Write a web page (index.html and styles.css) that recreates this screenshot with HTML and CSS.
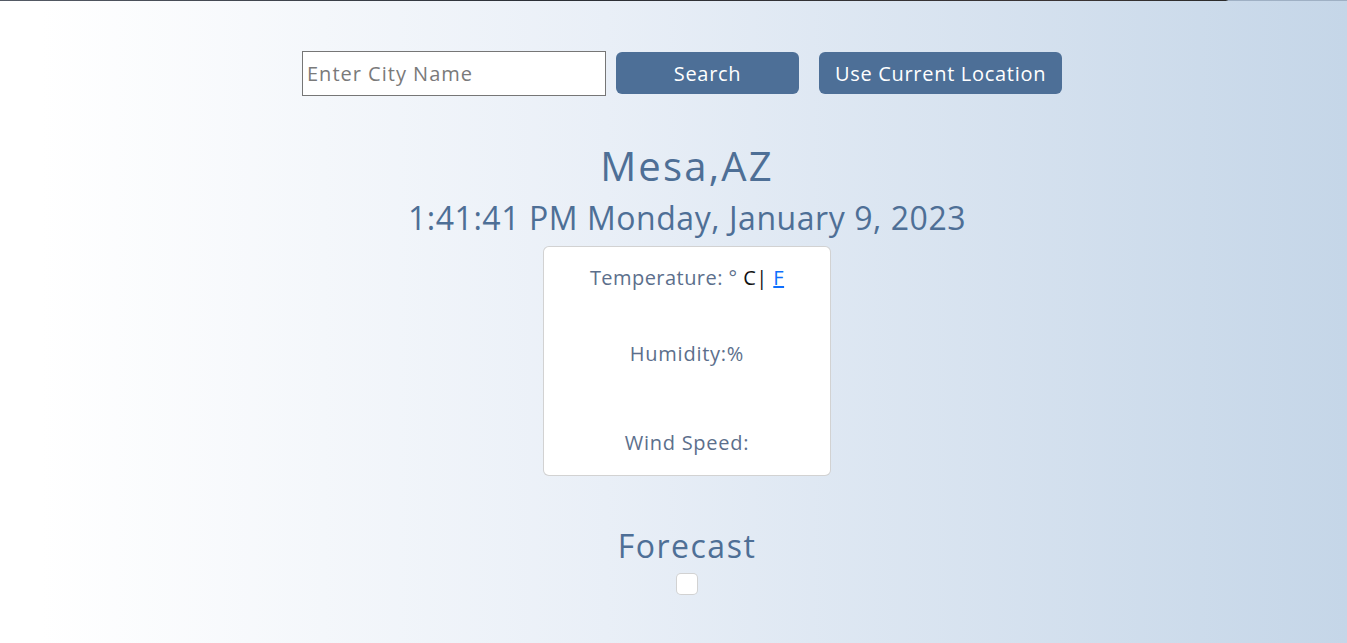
FILE: index.html
```html
<!DOCTYPE html>
<html lang="en">
<head>
<meta charset="utf-8">
<title>Weather</title>
<link rel="stylesheet" href="styles.css">
</head>
<body>
<div class="topline"></div>
<main class="page">
  <form class="search-row">
    <input class="city-input" type="text" placeholder="Enter City Name">
    <button class="btn btn-search" type="button">Search</button>
    <button class="btn btn-location" type="button">Use Current Location</button>
  </form>
  <h1 class="city">Mesa,AZ</h1>
  <h2 class="datetime">1:41:41 PM Monday, January 9, 2023</h2>
  <section class="card">
    <p class="stat stat-temp">Temperature: ° <span class="unit">C|</span> <a href="#" class="unit-link">F</a></p>
    <p class="stat stat-hum">Humidity:%</p>
    <p class="stat stat-wind">Wind Speed:</p>
  </section>
  <h2 class="forecast-title">Forecast</h2>
  <div class="forecast-box"></div>
</main>
</body>
</html>
```

FILE: styles.css
```css
html, body {
  margin: 0;
  padding: 0;
  height: 100%;
}
body {
  font-family: "Open Sans", "DejaVu Sans", sans-serif;
  background: linear-gradient(90deg, #ffffff 3%, #e9eff7 45%, #c5d6e8 100%);
  color: #4e6f96;
  overflow: hidden;
}
.topline {
  height: 1px;
  background: linear-gradient(90deg, #555b66 0%, #2b2f36 40%, #3a3434 80%, #2b2b2b 91%, #9fb0c4 91.2%);
}
.page {
  display: flex;
  flex-direction: column;
  align-items: center;
  padding-left: 27px;
}
.search-row {
  display: flex;
  align-items: flex-start;
  margin-top: 50px;
  margin-right: 10px;
}
.city-input {
  box-sizing: border-box;
  width: 304px;
  height: 45px;
  border: 1px solid #767676;
  padding: 0 4px;
  font-family: inherit;
  font-size: 20px;
  letter-spacing: 1px;
  color: #333;
  background: #fff;
  outline: none;
}
.city-input::placeholder {
  color: #7a7a7a;
}
.btn {
  box-sizing: border-box;
  height: 42px;
  margin-top: 1px;
  border: none;
  border-radius: 6px;
  background: #4d6f97;
  color: #ffffff;
  font-family: inherit;
  font-size: 20px;
  letter-spacing: 0.7px;
  cursor: pointer;
}
.btn-search {
  width: 183px;
  margin-left: 10px;
}
.btn-location {
  width: 243px;
  margin-left: 20px;
}
.city {
  margin: 46px 0 0;
  font-size: 40px;
  font-weight: 400;
  letter-spacing: 2.2px;
  line-height: 48px;
}
.datetime {
  margin: 9px 0 0;
  font-size: 32px;
  font-weight: 400;
  letter-spacing: 0.55px;
  line-height: 38px;
}
.card {
  box-sizing: border-box;
  width: 288px;
  height: 230px;
  margin-top: 9px;
  background: #fff;
  border: 1px solid rgba(0, 0, 0, 0.175);
  border-radius: 6px;
  display: flex;
  flex-direction: column;
  align-items: center;
  padding-top: 19px;
}
.stat {
  margin: 0;
  font-size: 20px;
  letter-spacing: 0.75px;
  line-height: 24px;
  color: #5c6f8c;
}
.stat-temp { letter-spacing: 0.45px; }
.stat-hum { margin-top: 52px; }
.stat-wind { margin-top: 65px; }
.unit { color: #111; }
.unit-link { color: #0d6efd; text-decoration: underline; }
.forecast-title {
  margin: 50px 0 0;
  font-size: 32px;
  font-weight: 400;
  letter-spacing: 1.5px;
  line-height: 40px;
}
.forecast-box {
  box-sizing: border-box;
  width: 22px;
  height: 22px;
  margin-top: 7px;
  background: #fff;
  border: 1px solid rgba(0, 0, 0, 0.175);
  border-radius: 5px;
}
```
